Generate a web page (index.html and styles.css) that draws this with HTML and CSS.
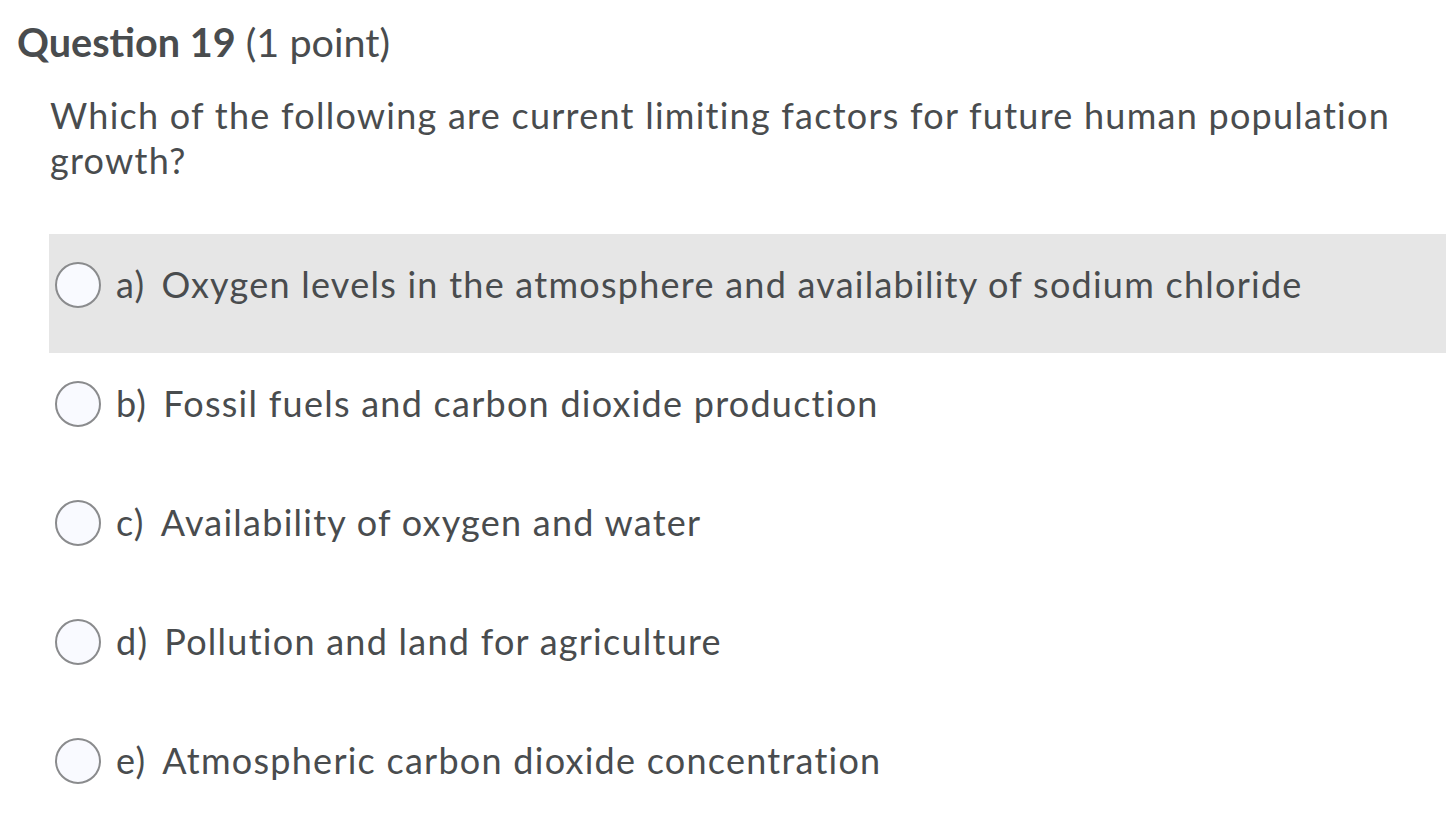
FILE: index.html
```html
<!DOCTYPE html>
<html>
<head>
<meta charset="utf-8">
<link rel="stylesheet" href="styles.css">
</head>
<body>
<div class="question">
  <h2 class="q-title"><span class="q-num">Question 19</span> (1 point)</h2>
  <p class="q-text">Which of the following are current limiting factors for future human population growth?</p>
  <ul class="options">
    <li class="option hover"><span class="radio"></span><span class="label"><span class="letter">a)</span>Oxygen levels in the atmosphere and availability of sodium chloride</span></li>
    <li class="option"><span class="radio"></span><span class="label"><span class="letter">b)</span>Fossil fuels and carbon dioxide production</span></li>
    <li class="option"><span class="radio"></span><span class="label"><span class="letter">c)</span>Availability of oxygen and water</span></li>
    <li class="option"><span class="radio"></span><span class="label"><span class="letter">d)</span>Pollution and land for agriculture</span></li>
    <li class="option"><span class="radio"></span><span class="label"><span class="letter">e)</span>Atmospheric carbon dioxide concentration</span></li>
  </ul>
</div>
</body>
</html>
```
FILE: styles.css
```css
html, body {
  margin: 0;
  padding: 0;
  background: #ffffff;
}
body {
  font-family: Lato, "Open Sans", sans-serif;
  color: #494c4e;
  width: 1446px;
  height: 822px;
  overflow: hidden;
}
.question {
  padding-top: 18px;
}
.q-title {
  margin: 0;
  padding-left: 17px;
  font-size: 39.6px;
  font-weight: normal;
  line-height: 48px;
}
.q-num {
  font-weight: bold;
}
.q-text {
  margin: 27px 40px 0 50px;
  font-size: 36px;
  line-height: 45px;
  letter-spacing: 1.25px;
}
.options {
  list-style: none;
  margin: 51px 0 0 49px;
  padding: 0;
}
.option {
  height: 119px;
  box-sizing: border-box;
  padding: 0 0 18px 6px;
  display: flex;
  align-items: center;
  gap: 15px;
}
.option.hover {
  background: #e6e6e6;
}
.radio {
  width: 46px;
  height: 46px;
  box-sizing: border-box;
  border: 2px solid #8a8b8d;
  border-radius: 50%;
  background: #f9faff;
  flex: none;
}
.label {
  font-size: 36px;
  line-height: 45px;
  letter-spacing: 1.25px;
  white-space: nowrap;
}
.letter {
  margin-right: 16px;
}
```
